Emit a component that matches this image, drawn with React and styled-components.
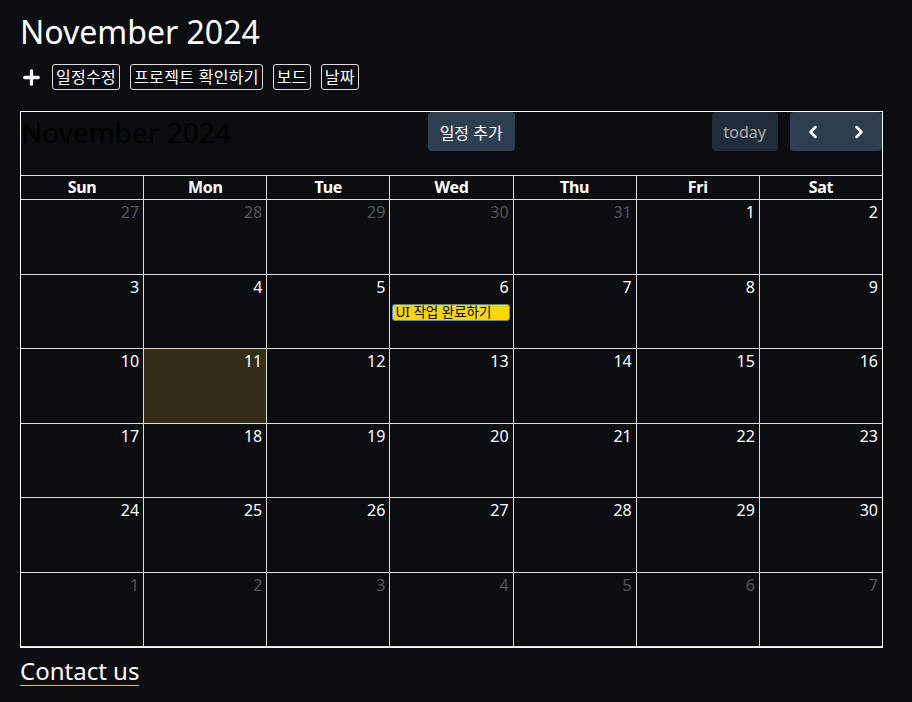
import React from "react"
import styled, { createGlobalStyle } from "styled-components"
import { Plus, ChevronLeft, ChevronRight } from "lucide-react"

const GlobalStyle = createGlobalStyle`
    body{
        margin: 0;
        background-color: #0c0d11;
        color: #fff;
        font-family: "Noto Sans", "Noto Sans CJK KR", sans-serif;
    }
`

const days = ["Sun", "Mon", "Tue", "Wed", "Thu", "Fri", "Sat"]

const buildCells = () => {
    const cells = []
    for (let d = 27; d <= 31; d++) cells.push({ day: d, other: true })
    for (let d = 1; d <= 30; d++) cells.push({ day: d })
    for (let d = 1; d <= 7; d++) cells.push({ day: d, other: true })
    return cells
}

const App = () => (
    <Page>
        <GlobalStyle />
        <Title>November 2024</Title>
        <Menu>
            <Plus size={23} strokeWidth={3.4} color="#fff" />
            <MenuButton>일정수정</MenuButton>
            <MenuButton>프로젝트 확인하기</MenuButton>
            <MenuButton>보드</MenuButton>
            <MenuButton>날짜</MenuButton>
        </Menu>

        <Calendar>
            <Toolbar>
                <CalTitle>November 2024</CalTitle>
                <ToolButton>일정 추가</ToolButton>
                <RightChunk>
                    <ToolButton disabled>today</ToolButton>
                    <ButtonGroup>
                        <ToolButton $icon><ChevronLeft size={20} strokeWidth={3} /></ToolButton>
                        <ToolButton $icon><ChevronRight size={20} strokeWidth={3} /></ToolButton>
                    </ButtonGroup>
                </RightChunk>
            </Toolbar>
            <Grid>
                {days.map(d => <DayName key={d}>{d}</DayName>)}
                {buildCells().map((c, i) => (
                    <Cell key={i} $today={!c.other && c.day === 11}>
                        <DayNumber $other={c.other}>{c.day}</DayNumber>
                        {!c.other && c.day === 6 && <Event>UI 작업 완료하기</Event>}
                    </Cell>
                ))}
            </Grid>
        </Calendar>

        <Contact>Contact us</Contact>
    </Page>
)

export default App

const Page = styled.div`
    padding: 12px 20px 20px 20px;
    width: 863px;
`

const Title = styled.h1`
    margin: 0;
    font-size: 32px;
    font-weight: 400;
    line-height: 40px;
`

const Menu = styled.div`
    display: flex;
    align-items: center;
    gap: 10px;
    margin-top: 12px;
    height: 26px;

    svg{
        margin-right: -1px;
    }
`

const MenuButton = styled.span`
    border: 1px solid #ddd;
    border-radius: 3px;
    padding: 0 3px;
    font-size: 16px;
    line-height: 24px;
    letter-spacing: 0.3px;
    color: #fff;
`

const Calendar = styled.div`
    margin-top: 21px;
    border: 1px solid #fff;
`

const Toolbar = styled.div`
    display: flex;
    justify-content: space-between;
    align-items: flex-start;
    margin-bottom: 23px;
`

const CalTitle = styled.h2`
    margin: 0;
    font-size: 28px;
    font-weight: 400;
    line-height: 40px;
    color: #000;
`

const RightChunk = styled.div`
    display: flex;
    gap: 12px;
`

const ButtonGroup = styled.div`
    display: flex;
`

const ToolButton = styled.button`
    display: flex;
    align-items: center;
    justify-content: center;
    height: 39px;
    padding: ${p => p.$icon ? "0 13px" : "0 12px"};
    border: none;
    border-radius: 4px;
    background-color: #2c3e50;
    color: #fff;
    font-family: inherit;
    font-size: 16px;

    &:disabled{
        opacity: 0.65;
        color: #fff;
    }

    ${ButtonGroup} &:first-child{
        border-radius: 4px 0 0 4px;
    }
    ${ButtonGroup} &:last-child{
        border-radius: 0 4px 4px 0;
    }
`

const Grid = styled.div`
    display: grid;
    grid-template-columns: repeat(7, 1fr);
    grid-template-rows: 23px repeat(6, 1fr);
    gap: 1px;
    height: 470px;
    background-color: #ddd;
    border-top: 1px solid #ddd;
    border-bottom: 1px solid #ddd;
`

const DayName = styled.div`
    background-color: #0c0d11;
    text-align: center;
    font-size: 16px;
    font-weight: 700;
    line-height: 23px;
    letter-spacing: -0.3px;
`

const Cell = styled.div`
    background-color: ${p => p.$today ? "#322d17" : "#0c0d11"};
    display: flex;
    flex-direction: column;
    min-width: 0;
`

const DayNumber = styled.div`
    text-align: right;
    padding: 0 4px;
    font-size: 16px;
    line-height: 24px;
    color: ${p => p.$other ? "#555" : "#fff"};
`

const Event = styled.div`
    margin: 5px 3px 0 2px;
    background-color: #ffd700;
    border: 1px solid #3788d8;
    border-radius: 3px;
    color: #000;
    font-size: 13.5px;
    line-height: 15px;
    padding: 0 2px;
`

const Contact = styled.a`
    display: inline-block;
    margin-top: 9px;
    font-size: 24px;
    line-height: 28px;
    color: #fff;
    border-bottom: 1px solid #f2c200;
`
